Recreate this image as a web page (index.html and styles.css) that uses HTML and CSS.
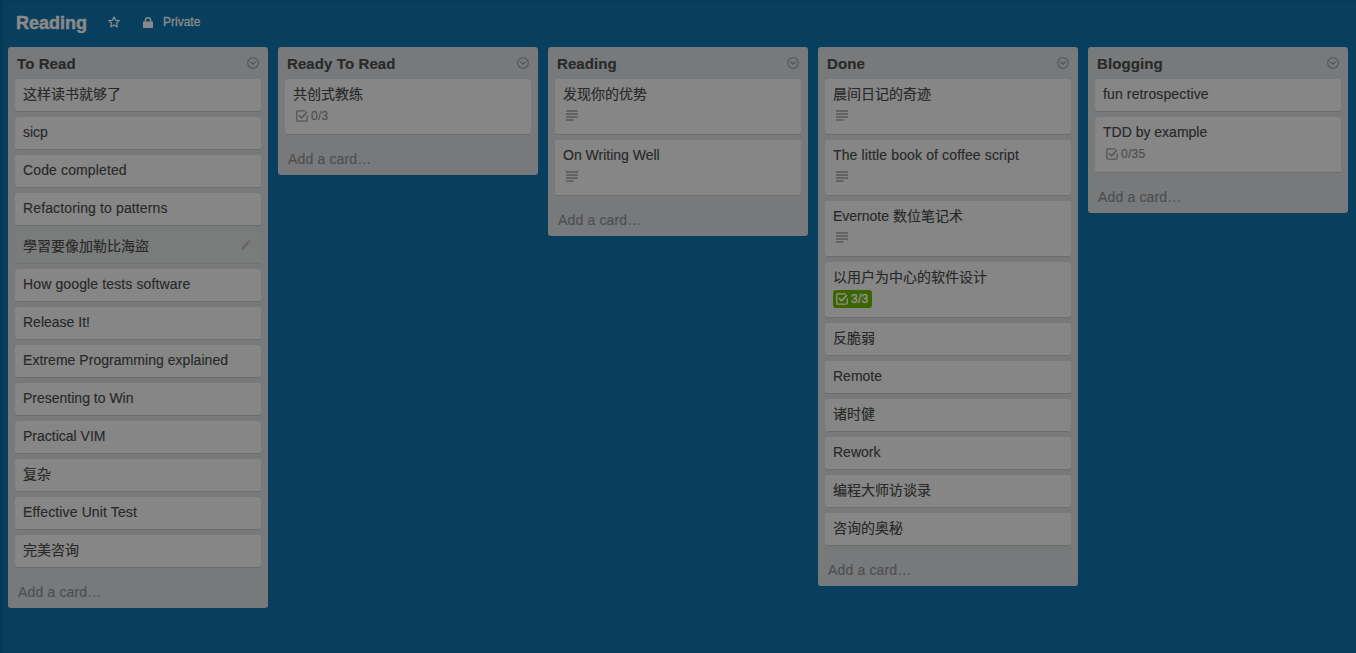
FILE: index.html
```html
<!DOCTYPE html>
<html lang="zh-CN">
<head>
<meta charset="utf-8">
<title>Reading</title>
<link rel="stylesheet" href="styles.css">
</head>
<body>
<svg class="defs" aria-hidden="true">
  <symbol id="menu" viewBox="0 0 12 12"><circle cx="6" cy="6" r="5.3" fill="none" stroke="currentColor" stroke-width="1.3"/><path d="M3.4 4.8L6 7l2.6-2.2" fill="none" stroke="currentColor" stroke-width="1.6"/></symbol>
  <symbol id="check" viewBox="0 0 12 12"><path d="M9.6.8H1.7a.9.9 0 0 0-.9.9v8.6c0 .5.4.9.9.9h8.6c.5 0 .9-.4.9-.9V5.6" fill="none" stroke="currentColor" stroke-width="1.3"/><path d="M3 5.2l2.6 2.7L11 2" fill="none" stroke="currentColor" stroke-width="1.6"/></symbol>
  <symbol id="lines" viewBox="0 0 12 12"><path d="M0 1h12M0 4h12M0 7h12M0 10h7.5" fill="none" stroke="currentColor" stroke-width="1.5"/></symbol>
</svg>
<header class="board-header">
  <h1>Reading</h1>
  <svg class="star" viewBox="0 0 12 12"><path d="M6 .9l1.5 3.3 3.8.4-2.8 2.5.8 3.8L6 9l-3.3 1.9.8-3.8L.7 4.6l3.8-.4z" fill="none" stroke="currentColor" stroke-width="1.3" stroke-linejoin="round"/></svg>
  <svg class="lock" viewBox="0 0 10 11"><path d="M2.4 5V3.4a2.6 2.6 0 0 1 5.2 0V5" fill="none" stroke="currentColor" stroke-width="1.4"/><rect y="4.5" width="10" height="6.5" rx=".6" fill="currentColor"/></svg>
  <span class="privacy">Private</span>
</header>
<main class="board">
  <section class="list">
    <header><h2>To Read</h2><svg class="menu"><use href="#menu"/></svg></header>
    <div class="cards">
      <article class="card">这样读书就够了</article>
      <article class="card">sicp</article>
      <article class="card loose">Code completed</article>
      <article class="card loose">Refactoring to patterns</article>
      <article class="card active">學習要像加勒比海盜<svg class="pencil" viewBox="0 0 10 10"><path d="M0 10l.7-2.7L6.4 1.6l2 2L2.700 9.300zM7 1l1-1 2 2-1 1z" fill="currentColor"/></svg></article>
      <article class="card loose">How google tests software</article>
      <article class="card">Release It!</article>
      <article class="card snug">Extreme Programming explained</article>
      <article class="card">Presenting to Win</article>
      <article class="card">Practical VIM</article>
      <article class="card">复杂</article>
      <article class="card loose">Effective Unit Test</article>
      <article class="card">完美咨询</article>
    </div>
    <footer>Add a card…</footer>
  </section>
  <section class="list">
    <header><h2>Ready To Read</h2><svg class="menu"><use href="#menu"/></svg></header>
    <div class="cards">
      <article class="card">共创式教练<div class="badge"><svg class="check"><use href="#check"/></svg>0/3</div></article>
    </div>
    <footer>Add a card…</footer>
  </section>
  <section class="list">
    <header><h2>Reading</h2><svg class="menu"><use href="#menu"/></svg></header>
    <div class="cards">
      <article class="card">发现你的优势<div class="badge"><svg class="lines"><use href="#lines"/></svg></div></article>
      <article class="card">On Writing Well<div class="badge"><svg class="lines"><use href="#lines"/></svg></div></article>
    </div>
    <footer>Add a card…</footer>
  </section>
  <section class="list">
    <header><h2>Done</h2><svg class="menu"><use href="#menu"/></svg></header>
    <div class="cards">
      <article class="card">晨间日记的奇迹<div class="badge"><svg class="lines"><use href="#lines"/></svg></div></article>
      <article class="card loose">The little book of coffee script<div class="badge"><svg class="lines"><use href="#lines"/></svg></div></article>
      <article class="card">Evernote 数位笔记术<div class="badge"><svg class="lines"><use href="#lines"/></svg></div></article>
      <article class="card">以用户为中心的软件设计<div class="badge complete"><svg class="check"><use href="#check"/></svg>3/3</div></article>
      <article class="card">反脆弱</article>
      <article class="card">Remote</article>
      <article class="card">诸时健</article>
      <article class="card">Rework</article>
      <article class="card">编程大师访谈录</article>
      <article class="card">咨询的奥秘</article>
    </div>
    <footer>Add a card…</footer>
  </section>
  <section class="list">
    <header><h2>Blogging</h2><svg class="menu"><use href="#menu"/></svg></header>
    <div class="cards">
      <article class="card loose">fun retrospective</article>
      <article class="card">TDD by example<div class="badge"><svg class="check"><use href="#check"/></svg>0/35</div></article>
    </div>
    <footer>Add a card…</footer>
  </section>
</main>
</body>
</html>
```
FILE: styles.css
```css
* { box-sizing: border-box; }
body {
  margin: 0;
  height: 653px;
  overflow: hidden;
  background: #083f5e;
  box-shadow: inset 3px 0 4px -2px #06334c;
  font-family: "Liberation Sans", "Noto Sans CJK SC", sans-serif;
  font-size: 14px;
  line-height: 18px;
  color: #292929;
  -webkit-text-stroke: .15px;
}
h1, h2 { margin: 0; font-weight: bold; }
svg { display: block; flex: none; }
.defs { display: none; }
.board-header {
  display: flex;
  align-items: center;
  height: 47px;
  padding: 0 16px 3px;
  color: #8a8a8a;
}
.board-header h1 { width: 92px; padding-top: 1px; font-size: 18px; line-height: 24px; -webkit-text-stroke: .5px; }
.star { width: 12px; height: 12px; margin-right: 23px; }
.lock { width: 10px; height: 11px; margin-right: 10px; }
.privacy { font-size: 12px; -webkit-text-stroke: .35px; }
.board { display: flex; align-items: flex-start; gap: 10px; padding: 0 8px; }
.list { width: 260px; flex: none; background: #77797b; border-radius: 3px; }
.list header {
  display: flex;
  justify-content: space-between;
  height: 32px;
  padding: 8px 9px 0;
}
.list h2 { font-size: 15px; line-height: 18px; letter-spacing: .1px; }
.menu { width: 12px; height: 12px; margin-top: 2px; color: #58595a; }
.cards { display: flex; flex-direction: column; gap: 5px; padding: 0 7px; }
.card {
  position: relative;
  min-height: 33px;
  padding: 6px 8px;
  border-bottom: 1px solid #6c6d6d;
  border-radius: 3px;
  background: #868686;
  white-space: nowrap;
}
.card.loose { letter-spacing: .13px; }
.card.snug { letter-spacing: .04px; }
.card:has(.badge) { height: 56px; }
.card.active { background: #7a7c7b; border-color: #707272; }
.pencil { position: absolute; right: 10px; top: 9px; width: 10px; height: 10px; color: #666; }
.badge {
  display: flex;
  align-items: center;
  gap: 3px;
  width: max-content;
  height: 18px;
  margin-top: 4px;
  padding: 0 3px;
  border-radius: 3px;
  font-size: 12px;
  letter-spacing: .3px;
  color: #4d4d4d;
}
.check { width: 12px; height: 12px; color: #565656; }
.lines { width: 12px; height: 12px; color: #585858; }
.badge.complete { background: #3c6500; color: #909090; -webkit-text-stroke: .4px; }
.complete .check { color: #909090; }
.list footer { height: 40px; padding: 15px 10px 0; letter-spacing: .15px; color: #4e4f50; }
```
